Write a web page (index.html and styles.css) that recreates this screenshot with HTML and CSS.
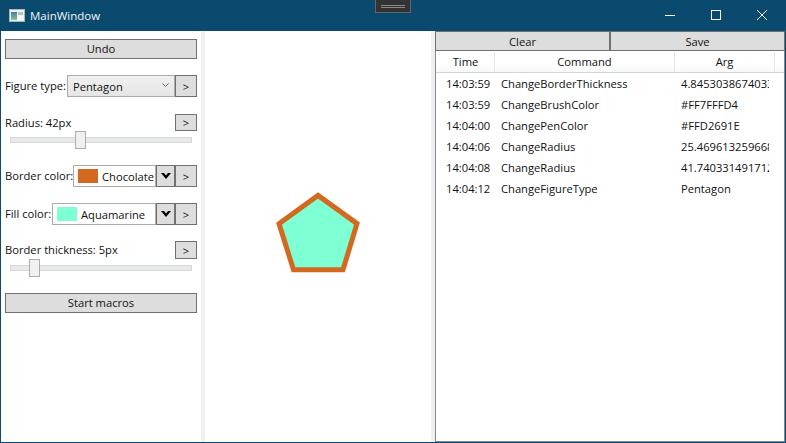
FILE: index.html
```html
<!DOCTYPE html>
<html>
<head>
<meta charset="utf-8">
<title>MainWindow</title>
<link rel="stylesheet" href="styles.css">
</head>
<body>
<div class="window">
  <header class="titlebar">
    <svg class="app-icon" width="16" height="13" viewBox="0 0 16 13">
      <defs>
        <linearGradient id="icon-fill" x1="0" y1="0" x2="0" y2="1">
          <stop offset="0" stop-color="#3f7f9c"/>
          <stop offset="1" stop-color="#8fc49a"/>
        </linearGradient>
      </defs>
      <rect x="0.5" y="0.5" width="15" height="12" fill="#eef1f2" stroke="#a9b8c0"/>
      <rect x="2" y="3" width="6" height="8" fill="url(#icon-fill)"/>
      <rect x="9" y="3" width="5" height="3" fill="#b4c6c2"/>
      <rect x="9" y="7" width="5" height="4" fill="#f7f9f9"/>
    </svg>
    <span class="title">MainWindow</span>
    <div class="win-controls">
      <svg class="win-btn" width="46" height="31" viewBox="0 0 46 31"><path d="M18 15.5h10" stroke="#fff" fill="none"/></svg>
      <svg class="win-btn" width="46" height="31" viewBox="0 0 46 31"><rect x="18.5" y="10.5" width="9" height="9" stroke="#fff" fill="none"/></svg>
      <svg class="win-btn" width="46" height="31" viewBox="0 0 46 31"><path d="M18 10l10 10M28 10l-10 10" stroke="#fff" fill="none"/></svg>
    </div>
  </header>
  <div class="debug-bar"><span class="debug-lines"></span></div>
  <main class="content">
    <section class="left">
      <button class="btn wide undo">Undo</button>
      <div class="row figure-row">
        <span class="lbl">Figure type:</span>
        <div class="combo">
          <span class="combo-text">Pentagon</span>
          <svg width="7" height="4" viewBox="0 0 7 4" class="chev"><path d="M0.5 0.5l3 3l3-3" stroke="#606060" fill="none"/></svg>
        </div>
        <button class="btn go">&gt;</button>
      </div>
      <div class="slider-head radius-head">
        <span class="lbl">Radius: 42px</span>
        <button class="btn go short">&gt;</button>
      </div>
      <div class="slider"><span class="thumb thumb-radius"></span></div>
      <div class="row border-row">
        <span class="lbl">Border color:</span>
        <div class="color-box border-box">
          <span class="swatch chocolate"></span><span class="color-name">Chocolate</span>
        </div>
        <button class="btn drop"><svg width="10" height="6" viewBox="0 0 10 6"><path d="M0 0h3l2 2.5l2-2.5h3l-5 6z" fill="#000"/></svg></button>
        <button class="btn go">&gt;</button>
      </div>
      <div class="row fill-row">
        <span class="lbl">Fill color:</span>
        <div class="color-box fill-box">
          <span class="swatch aquamarine"></span><span class="color-name">Aquamarine</span>
        </div>
        <button class="btn drop"><svg width="10" height="6" viewBox="0 0 10 6"><path d="M0 0h3l2 2.5l2-2.5h3l-5 6z" fill="#000"/></svg></button>
        <button class="btn go">&gt;</button>
      </div>
      <div class="slider-head thick-head">
        <span class="lbl">Border thickness: 5px</span>
        <button class="btn go short">&gt;</button>
      </div>
      <div class="slider"><span class="thumb thumb-thick"></span></div>
      <button class="btn wide macros">Start macros</button>
    </section>
    <div class="splitter"></div>
    <section class="canvas">
      <svg class="figure" viewBox="0 0 226 411">
        <polygon points="113,164.4 152,192.6 138,238.8 88.5,238.8 74,192.6" fill="#7FFFD4" stroke="#D2691E" stroke-width="5" stroke-linejoin="miter"/>
      </svg>
    </section>
    <div class="splitter"></div>
    <section class="right">
      <div class="actions">
        <button class="btn action">Clear</button>
        <button class="btn action">Save</button>
      </div>
      <div class="list">
        <div class="list-head">
          <div class="col-time th">Time</div>
          <div class="col-cmd th">Command</div>
          <div class="col-arg th">Arg</div>
          <div class="th-fill"></div>
        </div>
        <div class="list-row"><div class="col-time td">14:03:59</div><div class="col-cmd td">ChangeBorderThickness</div><div class="col-arg td">4.845303867403315</div></div>
        <div class="list-row"><div class="col-time td">14:03:59</div><div class="col-cmd td">ChangeBrushColor</div><div class="col-arg td">#FF7FFFD4</div></div>
        <div class="list-row"><div class="col-time td">14:04:00</div><div class="col-cmd td">ChangePenColor</div><div class="col-arg td">#FFD2691E</div></div>
        <div class="list-row"><div class="col-time td">14:04:06</div><div class="col-cmd td">ChangeRadius</div><div class="col-arg td">25.469613259668506</div></div>
        <div class="list-row"><div class="col-time td">14:04:08</div><div class="col-cmd td">ChangeRadius</div><div class="col-arg td">41.740331491712706</div></div>
        <div class="list-row"><div class="col-time td">14:04:12</div><div class="col-cmd td">ChangeFigureType</div><div class="col-arg td">Pentagon</div></div>
      </div>
    </section>
  </main>
</div>
</body>
</html>
```
FILE: styles.css
```css
* { box-sizing: border-box; }
html, body { margin: 0; padding: 0; }
body {
  width: 786px;
  height: 443px;
  overflow: hidden;
  font-family: "Open Sans", "Noto Sans", sans-serif;
  font-size: 11.2px;
  color: #111;
}
.window {
  position: relative;
  width: 786px;
  height: 443px;
  display: flex;
  flex-direction: column;
  background: #0a4a6f;
  padding: 0 1px 1px;
}
.titlebar {
  height: 31px;
  flex: none;
  display: flex;
  align-items: center;
  padding-left: 8px;
  color: #fff;
}
.app-icon { flex: none; margin-right: 5px; }
.title { font-size: 11.5px; color: #f2f6f8; }
.win-controls { margin-left: auto; display: flex; }
.win-btn { display: block; }
.debug-bar {
  position: absolute;
  left: 375px;
  top: 0;
  width: 36px;
  height: 13px;
  background: #333;
  border: 1px solid #666;
  border-top: 0;
  display: flex;
  align-items: center;
  justify-content: center;
}
.debug-lines {
  display: block;
  width: 24px;
  height: 3px;
  border-top: 1px solid #888;
  border-bottom: 1px solid #888;
}
.content { flex: 1; display: flex; background: #fff; min-height: 0; }
.left { width: 200px; flex: none; padding: 8px 4px 0 4px; display: flex; flex-direction: column; }
.splitter { width: 4px; flex: none; background: #f0f0f0; }
.canvas { width: 226px; flex: none; }
.figure { display: block; width: 226px; height: 411px; }
.right { flex: 1; min-width: 0; display: flex; flex-direction: column; }
.btn {
  font: inherit;
  color: #111;
  background: #ddd;
  border: 1px solid #707070;
  padding: 0;
  display: flex;
  align-items: center;
  justify-content: center;
}
.wide { width: 192px; height: 20px; flex: none; padding-bottom: 2px; }
.macros { margin-top: 16px; }
.row { display: flex; align-items: stretch; height: 22px; flex: none; }
.lbl { white-space: nowrap; line-height: 22px; }
.figure-row { margin-top: 16px; }
.figure-row .lbl { width: 62px; }
.border-row { margin-top: 16px; }
.border-row .lbl { width: 68px; }
.fill-row { margin-top: 16px; }
.fill-row .lbl { width: 47px; }
.go { width: 22px; flex: none; }
.short { height: 100%; }
.combo {
  width: 108px;
  display: flex;
  align-items: center;
  justify-content: space-between;
  padding: 0 5px 0 5px;
  background: linear-gradient(#f0f0f0, #e5e5e5);
  border: 1px solid #acacac;
}
.chev { margin-bottom: 3px; }
.color-box {
  display: flex;
  align-items: center;
  background: #fff;
  border: 1px solid #acacac;
  overflow: hidden;
  padding-left: 4px;
  white-space: nowrap;
}
.border-box { width: 83px; }
.fill-box { width: 104px; }
.swatch { width: 20px; height: 14px; flex: none; margin-right: 4px; }
.chocolate { background: #D2691E; }
.aquamarine { background: #7FFFD4; }
.drop { width: 19px; flex: none; }
.slider-head {
  display: flex;
  align-items: center;
  justify-content: space-between;
  flex: none;
}
.radius-head { margin-top: 17px; height: 17px; }
.thick-head { margin-top: 16px; height: 18px; }
.slider {
  position: relative;
  height: 18px;
  flex: none;
  margin: 0 5px;
  display: flex;
  align-items: center;
}
.slider::before {
  content: "";
  display: block;
  width: 100%;
  height: 4px;
  background: #e7eaea;
  border: 1px solid #d6d6d6;
}
.thumb {
  position: absolute;
  top: 0;
  width: 11px;
  height: 18px;
  background: #f0f0f0;
  border: 1px solid #acacac;
}
.thumb-radius { left: 65px; }
.thumb-thick { left: 19px; }
.actions { display: flex; height: 20px; flex: none; }
.action { flex: 1; }
.list { flex: 1; min-height: 0; border: 1px solid #828790; border-top: 0; padding-top: 1px; overflow: hidden; }
.list-head {
  display: flex;
  height: 21px;
  background: linear-gradient(#fff 50%, #f8f9fa);
  border-bottom: 1px solid #d5d5d5;
  margin-bottom: 1px;
  padding-left: 1px;
}
.th { text-align: center; line-height: 20px; border-right: 1px solid #e5e5e5; }
.th-fill { flex: 1; }
.col-time { width: 58px; flex: none; }
.col-cmd { width: 180px; flex: none; }
.col-arg { width: 100px; flex: none; }
.list-row { display: flex; height: 21px; padding-left: 1px; }
.td { line-height: 19px; padding-left: 6px; white-space: nowrap; overflow: hidden; }
.td.col-time { padding-left: 9px; }
.td.col-arg { width: 94px; }
```
